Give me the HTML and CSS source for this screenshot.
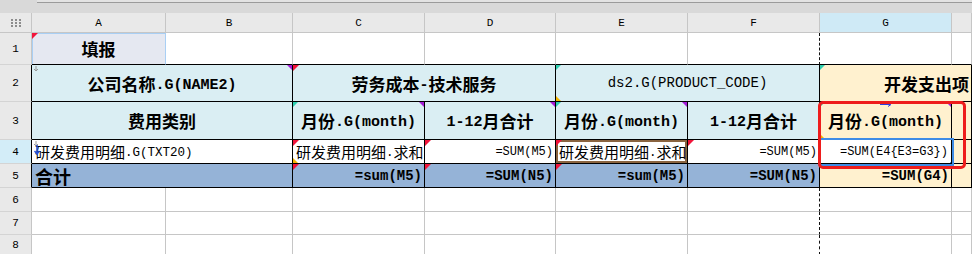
FILE: index.html
```html
<!DOCTYPE html>
<html lang="zh-CN">
<head>
    <meta charset="UTF-8">
    <meta name="viewport" content="width=device-width, initial-scale=1.0">
    <title>报表设计</title>
    <link rel="stylesheet" href="styles.css">
</head>
<body>
    <div class="topbar"><div class="tabline"></div></div>

    <div class="sheet">
        <!-- column headers -->
        <div class="corner">
            <svg width="10" height="8" viewBox="0 0 10 8">
                <rect x="0" y="0" width="2" height="2"/><rect x="4" y="0" width="2" height="2"/><rect x="8" y="0" width="2" height="2"/>
                <rect x="0" y="3" width="2" height="2"/><rect x="4" y="3" width="2" height="2"/><rect x="8" y="3" width="2" height="2"/>
                <rect x="0" y="6" width="2" height="2"/><rect x="4" y="6" width="2" height="2"/><rect x="8" y="6" width="2" height="2"/>
            </svg>
        </div>
        <div class="colhead">A</div>
        <div class="colhead">B</div>
        <div class="colhead">C</div>
        <div class="colhead">D</div>
        <div class="colhead">E</div>
        <div class="colhead">F</div>
        <div class="colhead active">G</div>
        <div class="colhead"></div>

        <!-- row 1 -->
        <div class="rowhead">1</div>
        <div class="cell top label hd"><i class="tri tl red"></i>填报</div>
        <div class="cell top"></div>
        <div class="cell top"></div>
        <div class="cell top"></div>
        <div class="cell top"></div>
        <div class="cell top brk"></div>
        <div class="cell top"></div>
        <div class="cell top"></div>

        <!-- row 2 -->
        <div class="rowhead edge">2</div>
        <div class="cell tb blue hd span2">
            <svg class="mark-down gray" width="6" height="6" viewBox="0 0 6 6"><path d="M3 0v5M1 3l2 2 2-2" fill="none" stroke="currentColor"/></svg>
            <i class="tri tr purple"></i>公司名称<span class="en">.G(NAME2)</span>
        </div>
        <div class="cell tb blue hd span2"><i class="tri tl red"></i>劳务成本<span class="en">-</span>技术服务</div>
        <div class="cell tb blue code span2"><i class="tri tl teal"></i><i class="tri bl yellow"></i>ds2.G(PRODUCT_CODE)</div>
        <div class="cell tb peach hd span2 clip"><i class="tri tl teal"></i>开发支出项目</div>

        <!-- row 3 -->
        <div class="rowhead edge">3</div>
        <div class="cell tb blue hd span2">费用类别</div>
        <div class="cell tb blue hd"><i class="tri tl teal"></i><i class="tri tr purple"></i>月份<span class="en">.G(month)</span></div>
        <div class="cell tb blue hd"><i class="tri tr purple"></i><span class="en">1-12</span>月合计</div>
        <div class="cell tb blue hd"><i class="tri tl teal"></i><i class="tri tr purple"></i>月份<span class="en">.G(month)</span></div>
        <div class="cell tb blue hd"><span class="en">1-12</span>月合计</div>
        <div class="cell tb peach hd">
            <i class="tri tl teal"></i><i class="tri tr purple"></i><i class="tri bl yellow"></i>
            <svg class="mark-right" width="12" height="5" viewBox="0 0 12 5"><path d="M0 2.5h10M8 0.5l3 2-3 2" fill="none" stroke="currentColor"/></svg>
            月份<span class="en">.G(month)</span>
        </div>
        <div class="cell tb peach"></div>

        <!-- row 4 -->
        <div class="rowhead edge current">4</div>
        <div class="cell tb txt span2">
            <svg class="mark-down gray" width="6" height="6" viewBox="0 0 6 6"><path d="M3 0v5M1 3l2 2 2-2" fill="none" stroke="currentColor"/></svg>
            <svg class="mark-down blue-ink" width="6" height="10" viewBox="0 0 6 10"><path d="M3 0v9M0.5 6l2.5 3 2.5-3" fill="none" stroke="currentColor" stroke-width="1.5"/></svg>
            研发费用明细<span class="en">.G(TXT20)</span>
        </div>
        <div class="cell tb txt"><i class="tri tl red"></i><i class="tri bl yellow"></i>研发费用明细<span class="en">.</span>求和</div>
        <div class="cell tb fx"><i class="tri tl red"></i>=SUM(M5)</div>
        <div class="cell tb txt boxed"><i class="tri tl red"></i>研发费用明细<span class="en">.</span>求和</div>
        <div class="cell tb fx"><i class="tri tl red"></i>=SUM(M5)</div>
        <div class="cell tb fx selected">=SUM(E4{E3=G3})</div>
        <div class="cell tb peach"></div>

        <!-- row 5 -->
        <div class="rowhead edge">5</div>
        <div class="cell tb total sum span2">合计</div>
        <div class="cell tb total fx big"><i class="tri tl red"></i>=sum(M5)</div>
        <div class="cell tb total fx big"><i class="tri tl red"></i>=SUM(N5)</div>
        <div class="cell tb total fx big"><i class="tri tl red"></i>=sum(M5)</div>
        <div class="cell tb total fx big">=SUM(N5)</div>
        <div class="cell tb peach fx big">=SUM(G4)</div>
        <div class="cell tb peach"></div>

        <!-- rows 6-8 -->
        <div class="rowhead">6</div>
        <div class="cell"></div><div class="cell"></div><div class="cell"></div><div class="cell"></div>
        <div class="cell"></div><div class="cell brk"></div><div class="cell"></div><div class="cell"></div>

        <div class="rowhead">7</div>
        <div class="cell"></div><div class="cell"></div><div class="cell"></div><div class="cell"></div>
        <div class="cell"></div><div class="cell brk"></div><div class="cell"></div><div class="cell"></div>

        <div class="rowhead">8</div>
        <div class="cell"></div><div class="cell"></div><div class="cell"></div><div class="cell"></div>
        <div class="cell"></div><div class="cell brk"></div><div class="cell"></div><div class="cell"></div>

        <div class="redmark"></div>
    </div>
</body>
</html>
```

FILE: styles.css
```css
body {
    margin: 0;
    background: #fff;
    font-family: "Noto Sans CJK SC", "Liberation Sans", sans-serif;
    overflow: hidden;
}

.topbar {
    height: 13px;
    background: #d9d9d9;
}

.topbar .tabline {
    margin-left: 37px;
    height: 2px;
    background: #e3e3e3;
    border-bottom: 1px solid #9b9b9b;
}

.sheet {
    position: relative;
    display: grid;
    grid-template-columns: 32px 134px 127px 132px 131px 132px 132px 132px 20px;
    grid-template-rows: 20px 32px 37px 38px 24px 24px 24px 23px 20px;
}

.corner,
.colhead,
.rowhead {
    display: flex;
    align-items: center;
    justify-content: center;
    box-sizing: border-box;
    background: #e9e9e9;
    border-right: 1px solid #c6c6c6;
    border-bottom: 1px solid #c6c6c6;
    font-family: "Liberation Mono", monospace;
    font-size: 11px;
    color: #000;
}

.corner svg {
    fill: #8c8c8c;
}

.colhead.active {
    background: #cfeaf6;
}

.rowhead {
    border-bottom-color: #d4d4d4;
}

.rowhead.edge {
    border-right-color: #000;
}

.rowhead.current {
    background: #d3edf8;
}

.cell {
    position: relative;
    display: flex;
    align-items: center;
    box-sizing: border-box;
    padding: 0 2px;
    overflow: hidden;
    white-space: nowrap;
    border-right: 1px solid #c6c6c6;
    border-bottom: 1px solid #c6c6c6;
}

.span2 {
    grid-column: span 2;
}

.cell.top {
    border-bottom-color: #000;
}

.cell.brk {
    border-right: 1px dashed #111;
}

.cell.tb {
    border-right-color: #000;
    border-bottom-color: #000;
}

.label {
    background: #e5e8f1;
    border-right-color: #a9cff4;
    box-shadow: inset 1px 1px 0 #a9cff4;
}

.blue {
    background: #daeef3;
}

.peach {
    background: #fff1cf;
}

.total {
    background: #95b3d7;
}

.hd {
    justify-content: center;
    font-size: 17px;
    font-weight: bold;
}

.hd .en {
    font-size: 15px;
    position: relative;
    top: 2px;
}

.clip {
    justify-content: flex-start;
    padding-left: 64px;
}

.code {
    justify-content: center;
    font-family: "Liberation Mono", monospace;
    font-size: 14px;
}

.en {
    font-family: "Liberation Mono", monospace;
}

.txt {
    font-size: 15px;
    padding-left: 3px;
}

.txt .en {
    font-size: 12.5px;
    position: relative;
    top: 1px;
}

.fx {
    justify-content: flex-end;
    font-family: "Liberation Mono", monospace;
    font-size: 12px;
    padding-right: 2px;
}

.fx.big {
    font-size: 14px;
    font-weight: bold;
}

.sum {
    font-size: 18px;
    font-weight: bold;
    padding-left: 3px;
}

.boxed {
    box-shadow: inset 0 0 0 2px #8a6440;
}

.selected {
    z-index: 1;
    padding-right: 3px;
    outline: 2px solid #3f8ce6;
}

.selected::after {
    content: "";
    position: absolute;
    right: -4px;
    bottom: -4px;
    width: 4px;
    height: 4px;
    background: #3f8ce6;
    border: 1px solid #fff;
}

.mark-down {
    position: absolute;
    top: 1px;
    left: 1px;
}

.mark-down.gray {
    color: #9a9a9a;
}

.mark-down.blue-ink {
    top: 5px;
    left: 2px;
    color: #2450d8;
}

.mark-right {
    position: absolute;
    top: 0;
    left: 60px;
    color: #2b3fe0;
}

.tri {
    position: absolute;
    width: 0;
    height: 0;
    border-style: solid;
}

.tl {
    top: 0;
    left: 0;
    border-width: 6px 6px 0 0;
}

.tr {
    top: 0;
    right: 0;
    border-width: 0 6px 6px 0;
}

.bl {
    bottom: 0;
    left: 0;
    border-width: 6px 0 0 6px;
}

.tl.red {
    border-color: #f2143a transparent transparent transparent;
}

.tl.teal {
    border-width: 5px 5px 0 0;
    border-color: #2fcfb0 transparent transparent transparent;
}

.tr.purple {
    border-width: 0 5px 5px 0;
    border-color: transparent #a41ed6 transparent transparent;
}

.bl.yellow {
    border-width: 5px 0 0 5px;
    border-color: transparent transparent transparent #f5b400;
}

.redmark {
    position: absolute;
    left: 818px;
    top: 88px;
    width: 148px;
    height: 68px;
    box-sizing: border-box;
    border: 3px solid #ee1c1c;
    border-radius: 5px;
    z-index: 2;
}
```
